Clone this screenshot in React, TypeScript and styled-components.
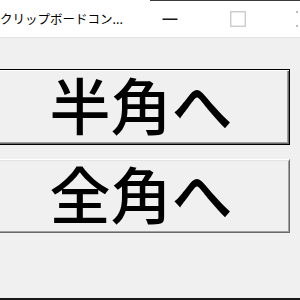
import React from "react";
import styled, { createGlobalStyle } from "styled-components";

const Global = createGlobalStyle`
  html, body { margin: 0; padding: 0; background: #f0f0f0; }
  body { width: 300px; height: 300px; overflow: hidden; font-family: "Noto Sans CJK JP", "Noto Sans", sans-serif; }
`;

const Window = styled.div`
  width: 300px;
  height: 300px;
  display: flex;
  flex-direction: column;
  box-sizing: border-box;
  border-bottom: 2px solid #1a1a1a;
  overflow: hidden;
`;

const TitleBar = styled.div`
  height: 38px;
  flex: none;
  background: #ffffff;
  border-bottom: 1px solid #e3e3e3;
  box-sizing: border-box;
  display: flex;
  align-items: center;
  position: relative;
`;

const TopEdge = styled.div`
  position: absolute;
  left: 150px;
  right: 0;
  top: 0;
  height: 1px;
  background: #3a3a3a;
`;

const Title = styled.div`
  font-size: 12.5px;
  color: #000;
  width: 140px;
  white-space: nowrap;
  margin-top: -1px;
`;

const Controls = styled.div`
  display: flex;
  align-items: center;
  margin-left: -4px;
`;

const CtrlBtn = styled.div`
  width: 68px;
  height: 30px;
  display: flex;
  align-items: center;
  justify-content: center;
`;

const CloseStub = styled.div`
  width: 2px;
  height: 16px;
  margin-left: 24px;
  display: flex;
  flex-direction: column;
  justify-content: space-between;
  &::before, &::after { content: ""; width: 2px; height: 2px; background: #bdbdbd; }
`;

const Client = styled.div`
  flex: 1;
  display: flex;
  flex-direction: column;
  padding: 31px 10px 0 0;
  gap: 14px;
  margin-left: -8px;
`;

const Button = styled.div<{ $default?: boolean }>`
  height: ${(p) => (p.$default ? 76 : 74)}px;
  box-sizing: border-box;
  background: #f0f0f0;
  display: flex;
  align-items: center;
  justify-content: center;
  font-family: "Noto Sans CJK JP", sans-serif;
  font-weight: 500;
  font-size: 61px;
  line-height: 1;
  color: #000;
  border: 1px solid ${(p) => (p.$default ? "#000" : "transparent")};
  border-top-color: ${(p) => (p.$default ? "#000" : "#ffffff")};
  border-left-color: ${(p) => (p.$default ? "#000" : "#ffffff")};
  border-right-color: ${(p) => (p.$default ? "#000" : "#696969")};
  border-bottom-color: ${(p) => (p.$default ? "#000" : "#696969")};
  box-shadow: ${(p) =>
    p.$default
      ? "inset 1px 1px 0 #ffffff, inset -1px -1px 0 #696969, inset -2px -2px 0 #a0a0a0"
      : "inset 1px 1px 0 #e3e3e3, inset -1px -1px 0 #a0a0a0"};
  padding-bottom: 7px;
`;

export default function App() {
  return (
    <>
      <Global />
      <Window>
        <TitleBar>
          <TopEdge />
          <Title>クリップボードコン...</Title>
          <Controls>
            <CtrlBtn>
              <svg width="16" height="16" viewBox="0 0 16 16">
                <rect x="0.5" y="7.5" width="15" height="1.4" fill="#000" />
              </svg>
            </CtrlBtn>
            <CtrlBtn>
              <svg width="16" height="16" viewBox="0 0 16 16">
                <rect x="0.75" y="0.75" width="14.5" height="14.5" fill="none" stroke="#c8c8c8" strokeWidth="1.3" />
              </svg>
            </CtrlBtn>
            <CloseStub />
          </Controls>
        </TitleBar>
        <Client>
          <Button $default>半角へ</Button>
          <Button>全角へ</Button>
        </Client>
      </Window>
    </>
  );
}
